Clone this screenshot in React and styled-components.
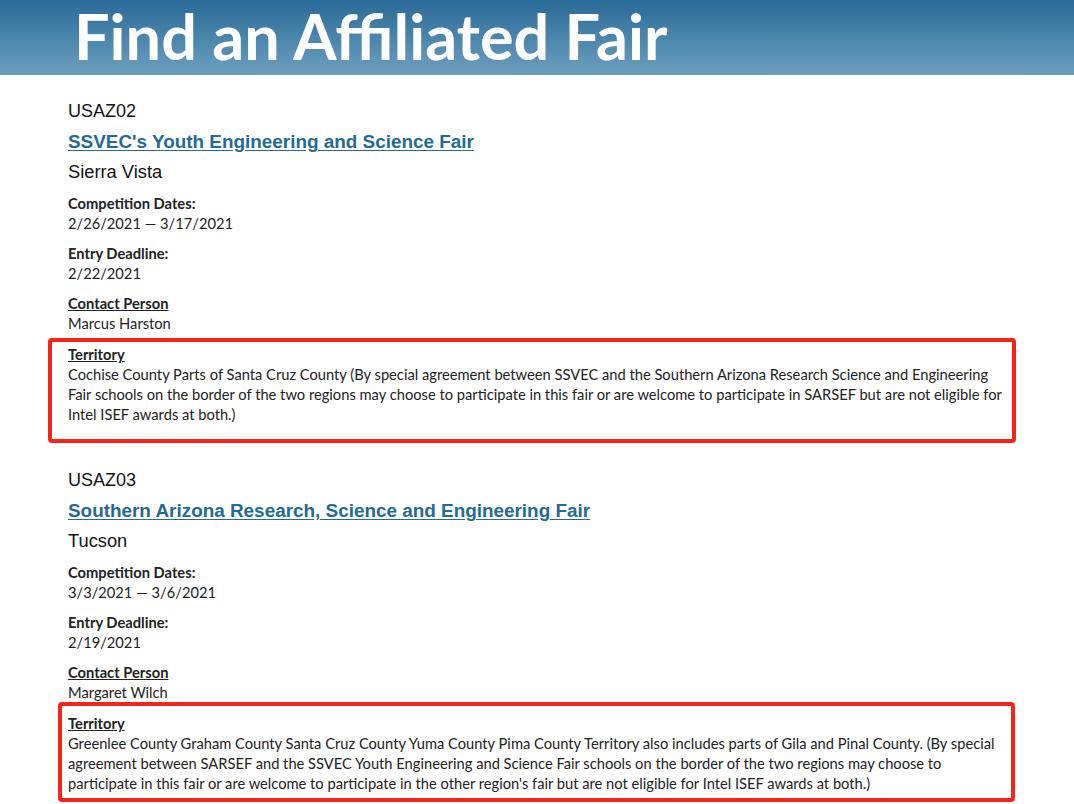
import styled, { createGlobalStyle } from "styled-components";

const GlobalStyle = createGlobalStyle`
    body {
        margin: 0;
        background: #fff;
        font-family: Lato, "Liberation Sans", sans-serif;
        color: #222;
    }
`;

const Banner = styled.header`
    height: 75px;
    background: linear-gradient(to bottom, #2a6a97 0%, #4a85ab 50%, #6d9fbf 100%);
    display: flex;
    align-items: center;
    padding-left: 74px;
    overflow: hidden;
`;

const BannerTitle = styled.h1`
    margin: 0;
    color: #fff;
    font-family: Lato, sans-serif;
    font-weight: 700;
    font-size: 63px;
    line-height: 1;
    margin-top: -5px;
`;

const List = styled.main`
    padding: 21px 0 0 68px;
    width: 935px;
`;

const Fair = styled.section`
    margin-bottom: 41px;
`;

const Code = styled.div`
    font-family: "Liberation Sans", Arial, sans-serif;
    font-size: 18px;
    line-height: 31px;
    color: #111;
`;

const FairLink = styled.a`
    display: block;
    font-family: "Liberation Sans", Arial, sans-serif;
    font-size: 18.9px;
    font-weight: 700;
    line-height: 30px;
    color: #246a96;
    text-decoration: underline;
    text-underline-offset: 2px;
    width: fit-content;
`;

const City = styled.div`
    font-family: "Liberation Sans", Arial, sans-serif;
    font-size: 18.3px;
    line-height: 30px;
    color: #111;
    margin-bottom: 6px;
`;

const Detail = styled.div`
    position: relative;
    font-size: 14.7px;
    line-height: 20px;
    margin-bottom: 10px;
    &:last-child {
        margin-top: 11px;
        margin-bottom: 0;
    }
`;

const Label = styled.div`
    font-weight: 700;
    text-decoration: ${(p) => (p.$underline ? "underline" : "none")};
`;

const Value = styled.div``;

const Highlight = styled.div`
    position: absolute;
    top: ${(p) => p.$top}px;
    bottom: ${(p) => p.$bottom}px;
    left: ${(p) => p.$left}px;
    right: ${(p) => p.$right}px;
    border: 4px solid #f7231a;
    border-radius: 4px;
    pointer-events: none;
`;

const fairs = [
    {
        code: "USAZ02",
        name: "SSVEC's Youth Engineering and Science Fair",
        city: "Sierra Vista",
        dates: "2/26/2021 — 3/17/2021",
        deadline: "2/22/2021",
        contact: "Marcus Harston",
        territory:
            "Cochise County Parts of Santa Cruz County (By special agreement between SSVEC and the Southern Arizona Research Science and Engineering Fair schools on the border of the two regions may choose to participate in this fair or are welcome to participate in SARSEF but are not eligible for Intel ISEF awards at both.)",
        box: { top: -6, bottom: -19, left: -20, right: -13 },
    },
    {
        code: "USAZ03",
        name: "Southern Arizona Research, Science and Engineering Fair",
        city: "Tucson",
        dates: "3/3/2021 — 3/6/2021",
        deadline: "2/19/2021",
        contact: "Margaret Wilch",
        territory:
            "Greenlee County Graham County Santa Cruz County Yuma County Pima County Territory also includes parts of Gila and Pinal County. (By special agreement between SARSEF and the SSVEC Youth Engineering and Science Fair schools on the border of the two regions may choose to participate in this fair or are welcome to participate in the other region's fair but are not eligible for Intel ISEF awards at both.)",
        box: { top: -11, bottom: -9, left: -10, right: -12 },
    },
];

const App = () => {
    return (
        <>
            <GlobalStyle />
            <Banner>
                <BannerTitle>Find an Affiliated Fair</BannerTitle>
            </Banner>
            <List>
                {fairs.map((f) => (
                    <Fair key={f.code}>
                        <Code>{f.code}</Code>
                        <FairLink href="#">{f.name}</FairLink>
                        <City>{f.city}</City>
                        <Detail>
                            <Label>Competition Dates:</Label>
                            <Value>{f.dates}</Value>
                        </Detail>
                        <Detail>
                            <Label>Entry Deadline:</Label>
                            <Value>{f.deadline}</Value>
                        </Detail>
                        <Detail>
                            <Label $underline>Contact Person</Label>
                            <Value>{f.contact}</Value>
                        </Detail>
                        <Detail>
                            <Label $underline>Territory</Label>
                            <Value>{f.territory}</Value>
                            <Highlight
                                $top={f.box.top}
                                $bottom={f.box.bottom}
                                $left={f.box.left}
                                $right={f.box.right}
                            />
                        </Detail>
                    </Fair>
                ))}
            </List>
        </>
    );
};

export default App;
